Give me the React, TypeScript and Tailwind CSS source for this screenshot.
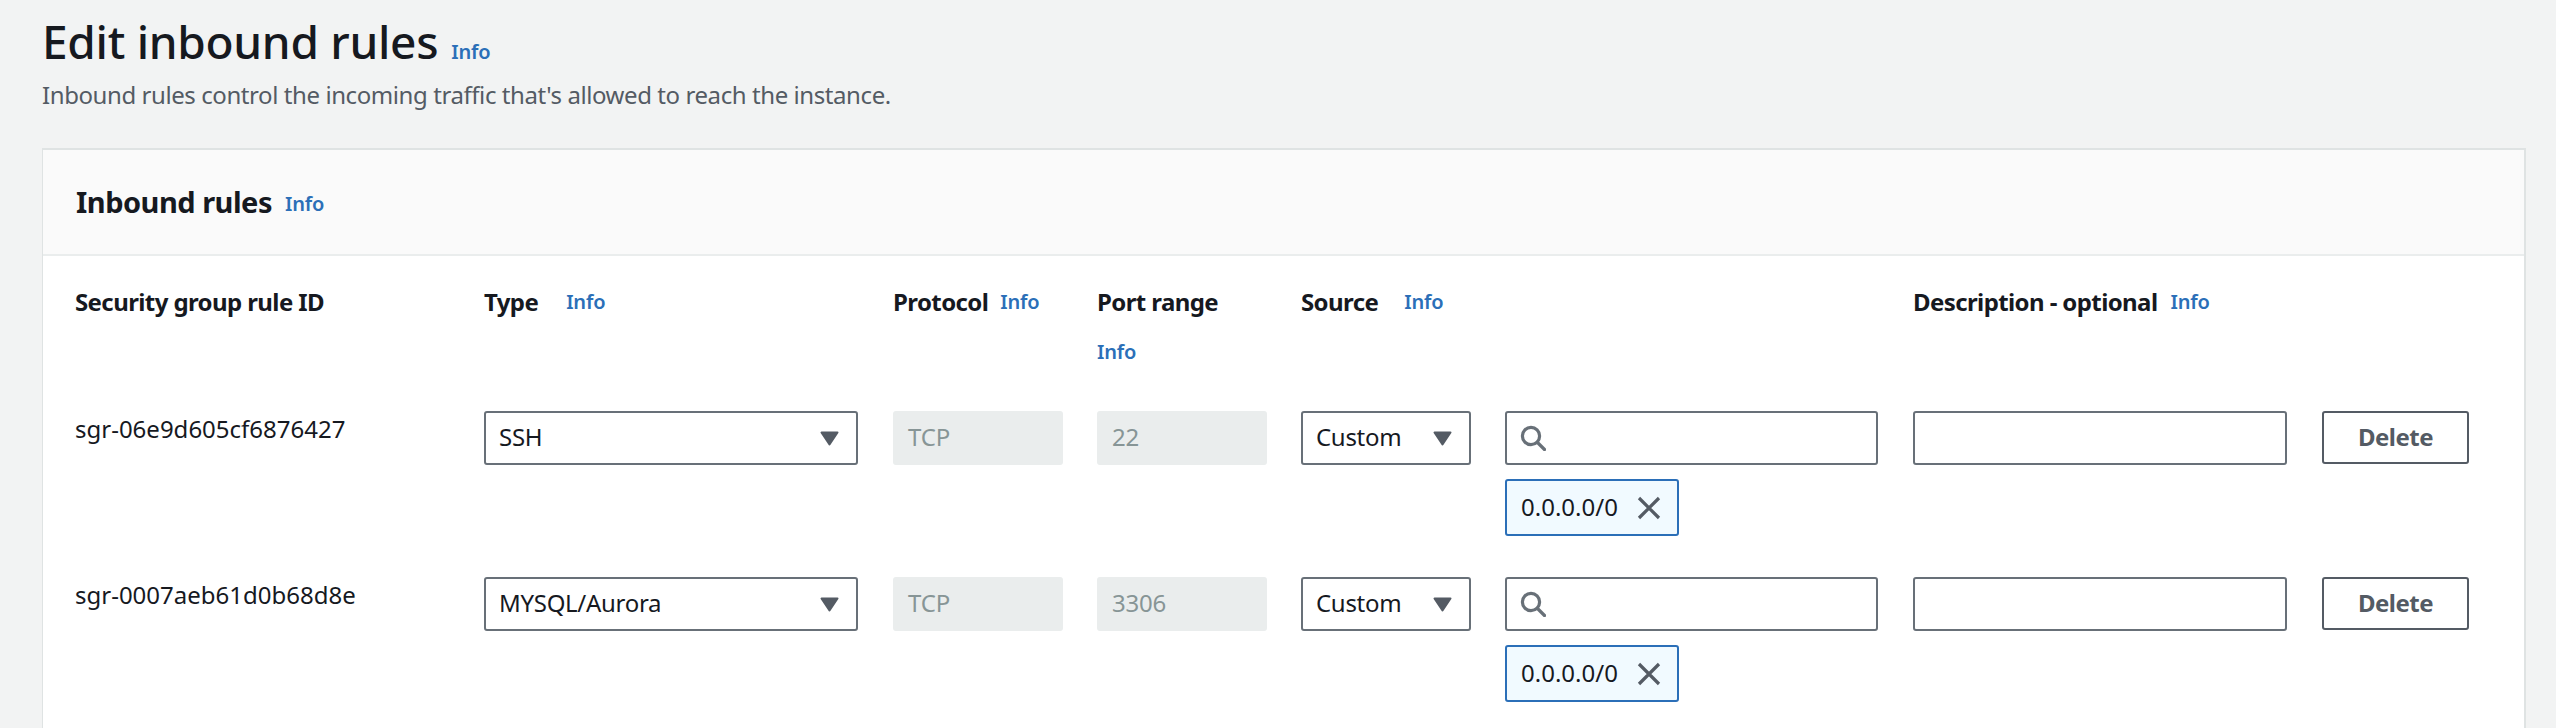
const font = "[font-family:'Noto_Sans',sans-serif]";

function Info({ className = "" }: { className?: string }) {
  return <span className={`text-[20px] leading-[30px] font-semibold tracking-[-0.2px] text-[#2b6fb8] ${className}`}>Info</span>;
}

function Caret() {
  return (
    <svg width="19" height="15" viewBox="0 0 19 15" className="shrink-0">
      <path d="M1.5 1.5h16L9.5 13.5z" fill="#545b64" stroke="#545b64" strokeWidth="2" strokeLinejoin="round" />
    </svg>
  );
}

function Select({ label, small = false }: { label: string; small?: boolean }) {
  return (
    <div className={`flex h-[54px] items-center justify-between rounded-[3px] border-2 border-[#687078] bg-white pl-[13px] ${small ? "w-[170px] pr-[17px]" : "w-[374px] pr-[17px]"}`}>
      <span className="pb-[2px] text-[24px] tracking-[-0.3px] text-[#16191f]">{label}</span>
      <Caret />
    </div>
  );
}

function Disabled({ value }: { value: string }) {
  return (
    <div className="flex h-[54px] w-[170px] items-center rounded-[3px] bg-[#eaeded] pb-[2px] pl-[15px] text-[24px] tracking-[-0.2px] text-[#879596]">
      {value}
    </div>
  );
}

function Source() {
  return (
    <div className="flex flex-col gap-[14px]">
      <div className="flex h-[54px] w-[373px] items-center rounded-[3px] border-2 border-[#687078] bg-white pl-[13px]">
        <svg width="26" height="26" viewBox="0 0 26 26" fill="none" stroke="#687078" strokeWidth="3.2">
          <circle cx="11" cy="11" r="8.6" />
          <path d="M17.5 17.5l7 7" strokeLinecap="round" />
        </svg>
      </div>
      <div className="flex h-[57px] w-[174px] items-center rounded-[3px] border-2 border-[#2b6fb8] bg-[#f1faff] pl-[14px]">
        <span className="pb-[2px] text-[24px] text-[#16191f]">0.0.0.0/0</span>
        <svg width="24" height="24" viewBox="0 0 24 24" className="ml-[19px]" fill="none" stroke="#545b64" strokeWidth="3.2">
          <path d="M2 2l20 20M22 2L2 22" />
        </svg>
      </div>
    </div>
  );
}

const tracks = "grid-cols-[374px_374px_169px_169px_169px_373px_374px_147px]";

function Row({ id, type, port }: { id: string; type: string; port: string }) {
  return (
    <div className={`grid h-[166px] ${tracks} gap-x-[35px]`}>
      <div className="pt-[1px] text-[24px] leading-[34px] text-[#16191f]">{id}</div>
      <Select label={type} />
      <Disabled value="TCP" />
      <Disabled value={port} />
      <Select label="Custom" small />
      <Source />
      <div className="h-[54px] w-[374px] rounded-[3px] border-2 border-[#687078] bg-white" />
      <div className="flex h-[53px] items-center justify-center rounded-[3px] border-2 border-[#545b64] bg-white pb-[2px] text-[24px] font-bold tracking-[-0.5px] text-[#545b64]">
        Delete
      </div>
    </div>
  );
}

function Label({ children }: { children: string }) {
  return <span className="text-[24px] font-bold leading-[34px] tracking-[-0.6px] text-[#16191f]">{children}</span>;
}

export default function App() {
  return (
    <div className={`h-[728px] overflow-hidden bg-[#f2f3f3] pl-[42px] pr-[30px] pt-[10px] ${font}`}>
      <div className="flex items-baseline gap-[13px]">
        <h1 className="text-[46px] leading-[62px] font-medium tracking-[-0.3px] text-[#16191f]">Edit inbound rules</h1>
        <Info />
      </div>
      <p className="mt-[6px] text-[24px] leading-[34px] tracking-[-0.42px] text-[#545b64]">
        Inbound rules control the incoming traffic that's allowed to reach the instance.
      </p>
      <div className="mt-[36px] border-t-2 border-l border-r-2 border-[#dfe3e3] bg-white">
        <div className="flex h-[106px] items-center gap-[13px] border-b-2 border-[#eaeded] bg-[#fafafa] pl-[33px]">
          <h2 className="text-[29px] font-bold leading-[40px] tracking-[-0.5px] text-[#16191f]">Inbound rules</h2>
          <Info className="mt-[4px]" />
        </div>
        <div className="pl-[32px]">
          <div className={`grid h-[155px] ${tracks} gap-x-[35px] pt-[29px]`}>
            <div><Label>Security group rule ID</Label></div>
            <div className="flex h-[34px] items-center gap-[28px]"><Label>Type</Label><Info /></div>
            <div className="flex h-[34px] items-center gap-[12px]"><Label>Protocol</Label><Info /></div>
            <div className="flex flex-col gap-[18px]"><Label>Port range</Label><Info /></div>
            <div className="flex h-[34px] items-center gap-[26px]"><Label>Source</Label><Info /></div>
            <div />
            <div className="col-span-2 flex h-[34px] items-center gap-[13px]"><Label>Description - optional</Label><Info /></div>
          </div>
          <Row id="sgr-06e9d605cf6876427" type="SSH" port="22" />
          <Row id="sgr-0007aeb61d0b68d8e" type="MYSQL/Aurora" port="3306" />
        </div>
      </div>
    </div>
  );
}
